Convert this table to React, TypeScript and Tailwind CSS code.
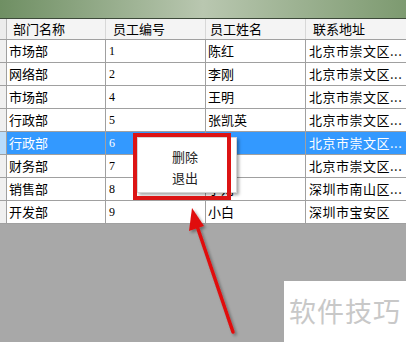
const rows = [
  { dept: "市场部", id: "1", name: "陈红", addr: "北京市崇文区..." },
  { dept: "网络部", id: "2", name: "李刚", addr: "北京市崇文区..." },
  { dept: "市场部", id: "4", name: "王明", addr: "北京市崇文区..." },
  { dept: "行政部", id: "5", name: "张凯英", addr: "北京市崇文区..." },
  { dept: "行政部", id: "6", name: "王vá", addr: "北京市崇文区...", selected: true },
  { dept: "财务部", id: "7", name: "刘徽", addr: "北京市崇文区..." },
  { dept: "销售部", id: "8", name: "小刘", addr: "深圳市南山区..." },
  { dept: "开发部", id: "9", name: "小白", addr: "深圳市宝安区" },
];

const font = { fontFamily: '"SimSun", "Noto Sans CJK SC", sans-serif' };

export default function App() {
  return (
    <div
      className="relative w-[406px] h-[342px] overflow-hidden bg-[#a8a8a8] text-[13px] text-black"
      style={font}
    >
      {/* blurred window strip */}
      <div className="h-[19px] bg-gradient-to-r from-[#6f8f63] via-[#b9c7b0] to-[#7d9a70] border-b border-[#3d4a3a]" />

      {/* header */}
      <div className="grid grid-cols-[7px_99px_100px_100px_100px] h-[21px] bg-[#f4f4f4] border-b border-[#a0a0a0]">
        <div className="border-r border-[#b8b8b8] bg-[#ececec]" />
        <div className="pl-[6px] leading-[20px] border-r border-[#d8d8d8]">部门名称</div>
        <div className="pl-[7px] leading-[20px] border-r border-[#d8d8d8]">员工编号</div>
        <div className="pl-[4px] leading-[20px] border-r border-[#d8d8d8]">员工姓名</div>
        <div className="pl-[7px] leading-[20px]">联系地址</div>
      </div>

      {/* rows */}
      {rows.map((r, i) => (
        <div
          key={i}
          className={`grid grid-cols-[7px_99px_100px_100px_100px] h-[23px] border-b border-[#a0a0a0] ${
            r.selected ? "bg-[#3399ff] text-white" : "bg-white"
          }`}
        >
          <div className={`border-r border-[#a0a0a0] ${r.selected ? "bg-[#b9dcfb]" : "bg-[#f0f0f0]"}`} />
          <div className="pl-[2px] leading-[22px] border-r border-[#a0a0a0]">{r.dept}</div>
          <div
            className="pl-[3px] leading-[22px] text-[12px] border-r border-[#a0a0a0]"
            style={{ fontFamily: '"Liberation Serif", serif' }}
          >
            {r.id}
          </div>
          <div className="pl-[2px] leading-[22px] border-r border-[#a0a0a0] whitespace-nowrap overflow-hidden">
            {r.name}
          </div>
          <div className="pl-[3px] leading-[22px] whitespace-nowrap overflow-hidden tracking-[0.5px]">{r.addr}</div>
        </div>
      ))}

      {/* context menu */}
      <div className="absolute left-[137px] top-[137px] w-[100px] h-[56px] bg-white shadow-[2px_2px_3px_rgba(0,0,0,0.35)] border border-[#d4d4d4]">
        <div className="flex flex-col pt-[10px] pl-[34px] gap-[4px] text-[#222]">
          <div className="leading-[17px]">删除</div>
          <div className="leading-[17px]">退出</div>
        </div>
      </div>
      <div className="absolute left-[133px] top-[133px] w-[98px] h-[67px] border-[4px] border-[#dc1414]" />

      {/* arrow */}
      <svg className="absolute left-0 top-0" width="406" height="342">
        <defs>
          <filter id="sh" x="-20%" y="-20%" width="140%" height="140%">
            <feDropShadow dx="2" dy="2" stdDeviation="1.5" floodColor="#000" floodOpacity="0.35" />
          </filter>
        </defs>
        <g filter="url(#sh)">
          <line x1="233" y1="332" x2="197" y2="226" stroke="#e01010" strokeWidth="3.5" strokeLinecap="round" />
          <polygon points="192,208 189,231 204,226" fill="#e01010" />
        </g>
      </svg>

      {/* watermark */}
      <div className="absolute left-[284px] top-[281px] w-[122px] h-[61px] bg-white flex items-center justify-center">
        <span
          className="text-[27px] text-[#c8c8c8] tracking-[1px]"
          style={{ fontFamily: '"Noto Sans CJK SC", sans-serif' }}
        >
          软件技巧
        </span>
      </div>
    </div>
  );
}
